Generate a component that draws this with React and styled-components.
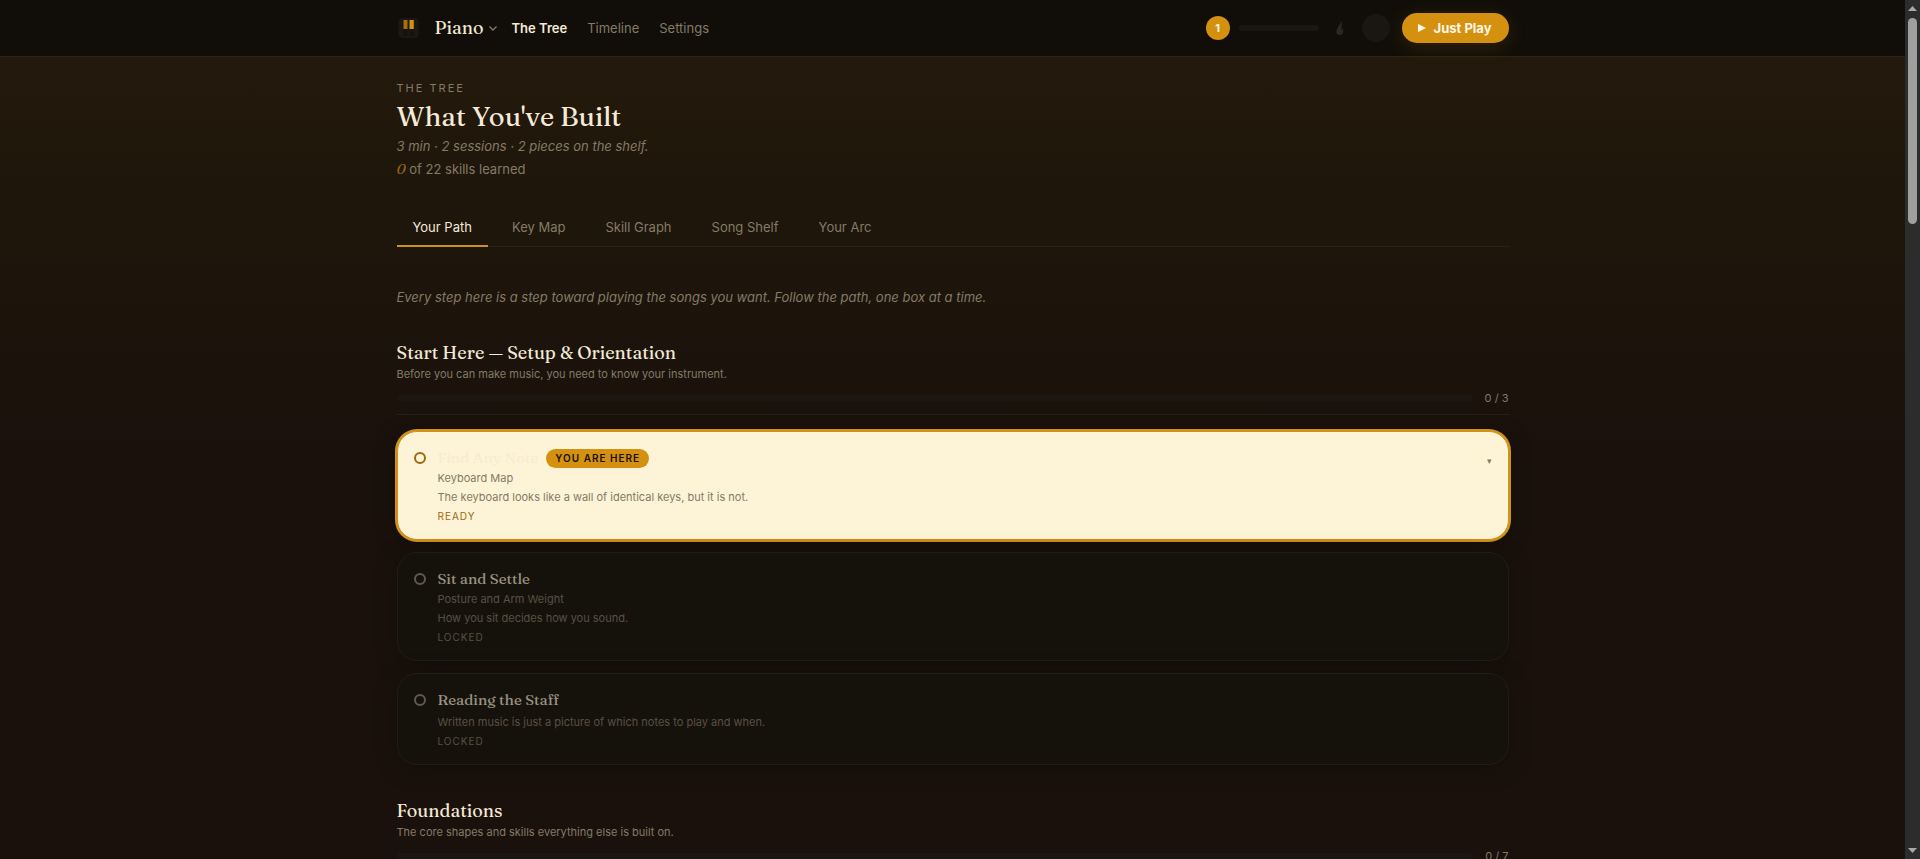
import React from "react";
import styled, { createGlobalStyle, css } from "styled-components";

const Global = createGlobalStyle`
  * { box-sizing: border-box; }
  body { margin: 0; background: #1a110c; color: #f5ead6; font-family: Inter, "Liberation Sans", sans-serif; font-size: 13px; }
  h1, h2, h3, p { margin: 0; font-weight: 400; }
  button { font: inherit; color: inherit; background: none; border: 0; padding: 0; cursor: pointer; }
`;

const serif = css`font-family: Fraunces, "Liberation Serif", serif;`;
const muted = "#857a66";

const Shell = styled.div`
  display: grid;
  grid-template-columns: minmax(0, 1fr) 15px;
  height: 100vh;
`;
const Scroller = styled.div`
  overflow-y: auto;
  scrollbar-width: none;
  background: linear-gradient(180deg, #251a0c 0, #1f160b 190px, #1a110c 440px);
`;
const Rail = styled.div`
  display: flex;
  flex-direction: column;
  align-items: center;
  justify-content: space-between;
  background: #2c2c2c;
  padding: 6px 0;
`;
const RailTrack = styled.div`
  flex: 1;
  width: 9px;
  margin: 7px 0;
`;
const RailThumb = styled.div`
  height: 25%;
  border-radius: 5px;
  background: #9f9f9f;
`;

const Header = styled.header`
  background: #110e09;
  border-bottom: 1px solid #2b2419;
`;
const Wrap = styled.div`
  max-width: 1160px;
  margin: 0 auto;
  padding: 0 24px;
`;
const Bar = styled(Wrap)`
  display: flex;
  align-items: center;
  height: 56px;
`;
const Instrument = styled.button`
  ${serif}
  display: flex;
  align-items: center;
  gap: 4px;
  margin-left: 14px;
  font-size: 18px;
  line-height: 24px;
`;
const Nav = styled.nav`
  display: flex;
  flex: 1;
  gap: 20px;
  margin-left: 14px;
`;
const NavLink = styled.a`
  font-size: 13px;
  line-height: 20px;
  text-decoration: none;
  color: ${(p) => (p.$active ? "#f5ead6" : muted)};
  font-weight: ${(p) => (p.$active ? 600 : 400)};
`;
const Level = styled.span`
  display: grid;
  place-items: center;
  width: 24px;
  height: 24px;
  border-radius: 50%;
  background: #d4900f;
  color: #fff8e8;
  font-size: 11px;
  font-weight: 700;
`;
const XpBar = styled.div`
  width: 80px;
  height: 6px;
  margin: 0 14px 0 9px;
  border-radius: 3px;
  background: #1a1713;
`;
const Avatar = styled.button`
  width: 28px;
  height: 28px;
  margin: 0 12px 0 15px;
  border-radius: 50%;
  background: #1a1713;
`;
const PlayButton = styled.button`
  display: flex;
  align-items: center;
  gap: 8px;
  height: 30px;
  padding: 0 17px 0 16px;
  border-radius: 15px;
  background: #d4900f;
  color: #fff8e8;
  font-size: 13px;
  font-weight: 700;
  box-shadow: 0 4px 20px rgba(212, 144, 15, 0.16);
`;

const Main = styled(Wrap).attrs({ as: "main" })`
  padding-top: 23px;
`;
const Eyebrow = styled.p`
  font-size: 11px;
  line-height: 16px;
  letter-spacing: 2px;
  color: ${muted};
`;
const Title = styled.h1`
  ${serif}
  margin-top: 3px;
  font-size: 27px;
  line-height: 36px;
`;
const Summary = styled.p`
  margin-top: ${(p) => (p.$italic ? 1 : 3)}px;
  font-size: 13px;
  line-height: 20px;
  font-style: ${(p) => (p.$italic ? "italic" : "normal")};
  color: ${muted};
`;
const Count = styled.em`
  ${serif}
  font-size: 14px;
  line-height: 16px;
  color: #9a6a0d;
`;
const Tabs = styled.div`
  display: flex;
  gap: 8px;
  margin-top: 29px;
  border-bottom: 1px solid #2a2219;
`;
const Tab = styled.button`
  height: 39px;
  padding: 0 16px;
  margin-bottom: -1px;
  border-bottom: 2px solid ${(p) => (p.$active ? "#c99228" : "transparent")};
  color: ${(p) => (p.$active ? "#f5ead6" : muted)};
  font-size: 13px;
`;
const Intro = styled.p`
  margin-top: 40px;
  font-size: 13px;
  line-height: 20px;
  font-style: italic;
  color: ${muted};
`;

const Section = styled.section`
  margin-top: 33px;
`;
const SectionTitle = styled.h2`
  ${serif}
  font-size: 18px;
  line-height: 26px;
`;
const SectionNote = styled.p`
  font-size: 11px;
  line-height: 16px;
  color: ${muted};
`;
const ProgressRow = styled.div`
  display: flex;
  align-items: center;
  gap: 12px;
  padding: 8px 0;
  border-bottom: 1px solid #262016;
  color: ${muted};
  font-size: 11px;
  line-height: 16px;
`;
const Track = styled.div`
  flex: 1;
  height: 6px;
  border-radius: 3px;
  background: #1a1713;
`;
const Cards = styled.div`
  display: flex;
  flex-direction: column;
  gap: 12px;
  margin-top: 16px;
`;
const Card = styled.article`
  display: flex;
  gap: 12px;
  padding: 16px;
  border: 1px solid ${(p) => (p.$current ? "#d0921a" : "#211d15")};
  border-radius: 20px;
  background: ${(p) => (p.$current ? "#fdf3d7" : "#15120c")};
  box-shadow: ${(p) => (p.$current ? "0 0 0 2px #d0921a, " : "")}0 4px 20px rgba(15, 14, 8, 0.7);
`;
const Ring = styled.span`
  width: 12px;
  height: 12px;
  margin-top: 4px;
  border: 2px solid ${(p) => (p.$current ? "#9a6a0d" : "#5f5950")};
  border-radius: 50%;
`;
const CardBody = styled.div`
  flex: 1;
  opacity: ${(p) => (p.$locked ? 0.6 : 1)};
  color: ${muted};
  font-size: 11px;
  line-height: 16px;
`;
const CardHead = styled.div`
  display: flex;
  align-items: center;
  gap: 8px;
  height: 20px;
`;
const CardTitle = styled.h3`
  ${serif}
  font-size: 15px;
  line-height: 20px;
  color: ${(p) => (p.$current ? "#f8ead3" : "#f5ead6")};
`;
const Badge = styled.span`
  padding: 0 9px;
  border-radius: 10px;
  background: #d4900f;
  color: #1a110c;
  font-size: 10px;
  font-weight: 600;
  line-height: 19px;
  letter-spacing: 1px;
`;
const Lesson = styled.p`
  margin-top: 3px;
  line-height: 14px;
`;
const Blurb = styled.p`
  margin-top: 4px;
`;
const Status = styled.p`
  margin-top: 4px;
  font-size: 10px;
  line-height: 14px;
  letter-spacing: 1px;
  color: ${(p) => (p.$current ? "#9a6a0d" : muted)};
`;
const Expand = styled.button`
  align-self: flex-start;
  margin-top: 5px;
  color: ${muted};
  font-size: 9px;
  line-height: 16px;
`;

const Logo = () => (
  <svg width="24" height="24" viewBox="0 0 24 24" aria-hidden="true">
    <rect x="1.500" y="2" width="20" height="20" rx="4" fill="#1b1814" />
    <path d="M6.500 13h4v7h-4zM12.500 13h4.300v7h-4.300z" fill="#15120e" />
    <rect x="6.500" y="4" width="4" height="9" rx=".5" fill="#a86f0b" />
    <rect x="12.500" y="4" width="4.300" height="9" rx=".5" fill="#d4900f" />
  </svg>
);
const Chevron = () => (
  <svg width="10" height="10" viewBox="0 0 10 10" fill="none" stroke={muted} strokeWidth="1.3" aria-hidden="true">
    <path d="M1.500 3.500 5 7l3.500-3.500" />
  </svg>
);
const Flame = () => (
  <svg width="14" height="16" viewBox="0 0 14 16" aria-hidden="true">
    <path d="M8.200 0C8.600 4 3.400 7.500 3.400 12c0 1.900 1 3 3.300 3s3.500-1.400 3.500-3.500c0-1.500-.4-2.700-.8-3.400-.3 1.300-.9 2-1.500 2.400C8.800 7.300 9.200 3.500 8.200 0z" fill="#2b2823" />
  </svg>
);
const PlayIcon = () => (
  <svg width="8" height="8" viewBox="0 0 8 8" aria-hidden="true">
    <path d="M0 0 8 4 0 8z" fill="currentColor" />
  </svg>
);
const Arrow = ({ up }) => (
  <svg width="9" height="5" viewBox="0 0 9 5" aria-hidden="true">
    <path d={up ? "M0 5 4.500 0 9 5z" : "M0 0h9L4.500 5z"} fill="#a8a8a8" />
  </svg>
);

const tabs = ["Your Path", "Key Map", "Skill Graph", "Song Shelf", "Your Arc"];
const sections = [
  {
    title: "Start Here — Setup & Orientation",
    note: "Before you can make music, you need to know your instrument.",
    count: "0 / 3",
    skills: [
      { title: "Find Any Note", lesson: "Keyboard Map", blurb: "The keyboard looks like a wall of identical keys, but it is not.", current: true },
      { title: "Sit and Settle", lesson: "Posture and Arm Weight", blurb: "How you sit decides how you sound." },
      { title: "Reading the Staff", blurb: "Written music is just a picture of which notes to play and when." },
    ],
  },
  { title: "Foundations", note: "The core shapes and skills everything else is built on.", count: "0 / 7", skills: [] },
];

const SkillCard = ({ title, lesson, blurb, current }) => (
  <Card $current={current}>
    <Ring $current={current} />
    <CardBody $locked={!current}>
      <CardHead>
        <CardTitle $current={current}>{title}</CardTitle>
        {current && <Badge>YOU ARE HERE</Badge>}
      </CardHead>
      {lesson && <Lesson>{lesson}</Lesson>}
      <Blurb>{blurb}</Blurb>
      <Status $current={current}>{current ? "READY" : "LOCKED"}</Status>
    </CardBody>
    {current && <Expand aria-label="Expand">▾</Expand>}
  </Card>
);

export default function App() {
  return (
    <Shell>
      <Global />
      <Scroller>
        <Header>
          <Bar>
            <Logo />
            <Instrument>Piano <Chevron /></Instrument>
            <Nav>
              <NavLink href="#tree" $active>The Tree</NavLink>
              <NavLink href="#timeline">Timeline</NavLink>
              <NavLink href="#settings">Settings</NavLink>
            </Nav>
            <Level>1</Level>
            <XpBar />
            <Flame />
            <Avatar aria-label="Account" />
            <PlayButton><PlayIcon />Just Play</PlayButton>
          </Bar>
        </Header>
        <Main>
          <Eyebrow>THE TREE</Eyebrow>
          <Title>What You've Built</Title>
          <Summary $italic>3 min · 2 sessions · 2 pieces on the shelf.</Summary>
          <Summary><Count>0</Count> of 22 skills learned</Summary>
          <Tabs role="tablist">
            {tabs.map((t, i) => (
              <Tab key={t} role="tab" aria-selected={i === 0} $active={i === 0}>{t}</Tab>
            ))}
          </Tabs>
          <Intro>Every step here is a step toward playing the songs you want. Follow the path, one box at a time.</Intro>
          {sections.map((s) => (
            <Section key={s.title}>
              <SectionTitle>{s.title}</SectionTitle>
              <SectionNote>{s.note}</SectionNote>
              <ProgressRow><Track />{s.count}</ProgressRow>
              <Cards>{s.skills.map((k) => <SkillCard key={k.title} {...k} />)}</Cards>
            </Section>
          ))}
        </Main>
      </Scroller>
      <Rail aria-hidden="true">
        <Arrow up />
        <RailTrack><RailThumb /></RailTrack>
        <Arrow />
      </Rail>
    </Shell>
  );
}
